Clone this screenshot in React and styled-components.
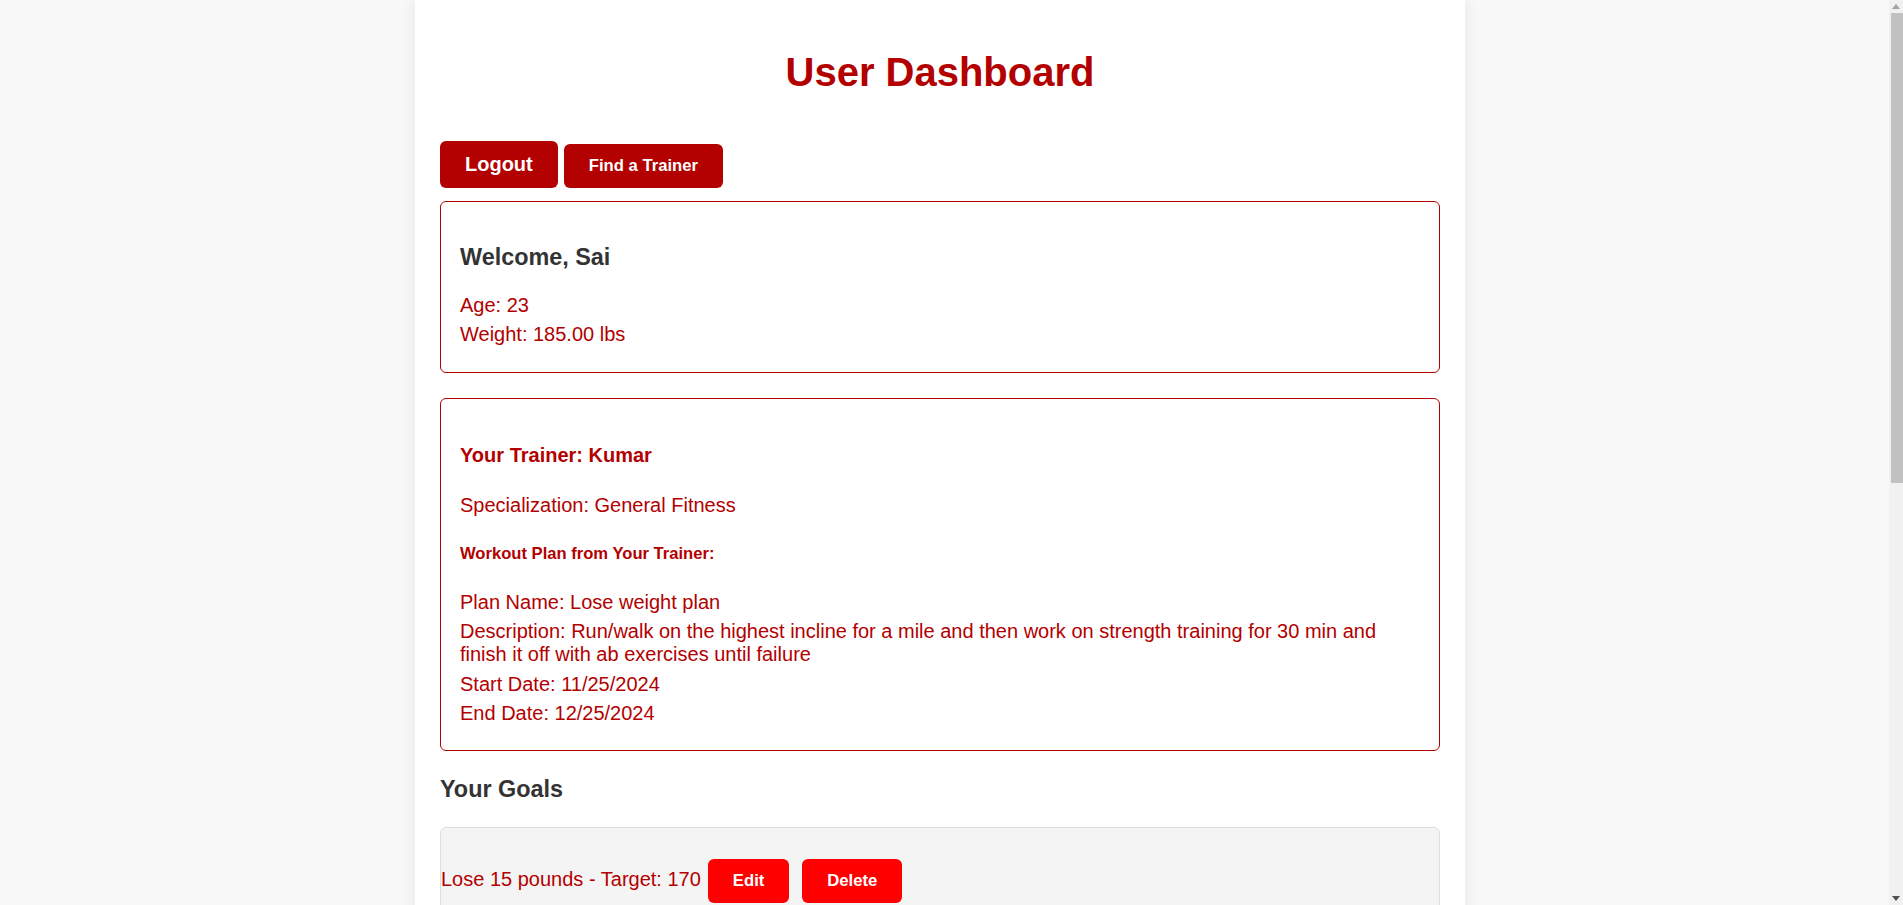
import React from 'react';
import styled, { createGlobalStyle } from 'styled-components';

const GlobalStyle = createGlobalStyle`
  body {
    margin: 0;
    padding-right: 23px;
    background: #f8f8f8;
    font-family: "Liberation Sans", Arial, sans-serif;
  }
`;

const Page = styled.div`
  box-sizing: border-box;
  width: 1050px;
  min-height: 1690px;
  margin: 0 auto;
  padding: 25px 25px 40px;
  background: #ffffff;
  box-shadow: 0 0 16px rgba(0, 0, 0, 0.08);
`;

const Title = styled.h1`
  margin: 24px 0 0;
  font-size: 40px;
  line-height: 46px;
  font-weight: bold;
  text-align: center;
  color: #b30000;
`;

const ButtonRow = styled.div`
  display: flex;
  align-items: baseline;
  gap: 6px;
  margin: 46px 0 13px;
`;

const Button = styled.button`
  border: none;
  border-radius: 6px;
  padding: 12px 25px;
  font-family: "Liberation Sans", Arial, sans-serif;
  font-weight: bold;
  font-size: ${(p) => (p.$big ? '20px' : '16.67px')};
  line-height: ${(p) => (p.$big ? '23px' : '20px')};
  color: #ffffff;
  background: ${(p) => (p.$bright ? '#ff0000' : '#b30000')};
  margin-left: ${(p) => p.$gap || 0}px;
  cursor: pointer;
`;

const Card = styled.div`
  border: 1px solid #b30000;
  border-radius: 6px;
  padding: 19px;
  margin-bottom: 25px;
`;

const Heading = styled.h3`
  margin: 23px 0;
  font-size: 23.4px;
  line-height: 27px;
  font-weight: bold;
  color: #333333;
`;

const TrainerName = styled.h4`
  margin: 26.6px 0;
  font-size: 20px;
  line-height: 23px;
  font-weight: bold;
  color: #b30000;
`;

const PlanHeading = styled.h5`
  margin: 27.7px 0;
  font-size: 16.6px;
  line-height: 19px;
  font-weight: bold;
  color: #b30000;
`;

const Info = styled.p`
  margin: 6.25px 0;
  font-size: 20px;
  line-height: 23px;
  color: #b30000;
`;

const GoalsTitle = styled(Heading)`
  margin-bottom: 24px;
`;

const GoalList = styled.ul`
  list-style: none;
  margin: 0 0 25px;
  padding: 31px 0;
  background: #f4f4f4;
  border: 1px solid #dddddd;
  border-radius: 6px;
`;

const GoalItem = styled.li`
  display: flex;
  align-items: baseline;
  font-size: 20px;
  line-height: 23px;
  color: #b30000;
`;

const Form = styled.form`
  display: flex;
  flex-direction: column;
  gap: 12px;
  max-width: 500px;
`;

const Input = styled.input`
  padding: 10px 12px;
  font-size: 18px;
  font-family: "Liberation Sans", Arial, sans-serif;
  border: 1px solid #cccccc;
  border-radius: 6px;
`;

/* window scrollbar as it appears in the screenshot */
const Scrollbar = styled.div`
  position: fixed;
  top: 0;
  right: 0;
  bottom: 0;
  width: 14px;
  background: #f1f1f1;
  display: flex;
  flex-direction: column;
  align-items: stretch;
`;

const Arrow = styled.div`
  height: 13px;
  display: flex;
  align-items: center;
  justify-content: center;
  margin-top: ${(p) => (p.$down ? 'auto' : '0')};
`;

const Thumb = styled.div`
  height: 470px;
  margin-left: 2px;
  background: #c1c1c1;
`;

const goals = [{ id: 1, text: 'Lose 15 pounds', target: 170 }];

export default function App() {
  return (
    <>
      <GlobalStyle />
      <Page>
        <Title>User Dashboard</Title>
        <ButtonRow>
          <Button $big>Logout</Button>
          <Button>Find a Trainer</Button>
        </ButtonRow>

        <Card>
          <Heading>Welcome, Sai</Heading>
          <Info>Age: 23</Info>
          <Info>Weight: 185.00 lbs</Info>
        </Card>

        <Card>
          <TrainerName>Your Trainer: Kumar</TrainerName>
          <Info>Specialization: General Fitness</Info>
          <PlanHeading>Workout Plan from Your Trainer:</PlanHeading>
          <Info>Plan Name: Lose weight plan</Info>
          <Info>
            Description: Run/walk on the highest incline for a mile and then work on strength
            training for 30 min and finish it off with ab exercises until failure
          </Info>
          <Info>Start Date: 11/25/2024</Info>
          <Info>End Date: 12/25/2024</Info>
        </Card>

        <GoalsTitle>Your Goals</GoalsTitle>
        <GoalList>
          {goals.map((goal) => (
            <GoalItem key={goal.id}>
              {goal.text} - Target: {goal.target}
              <Button $bright $gap={7}>Edit</Button>
              <Button $bright $gap={13}>Delete</Button>
            </GoalItem>
          ))}
        </GoalList>

        <Heading>Add a New Goal</Heading>
        <Form onSubmit={(e) => e.preventDefault()}>
          <Input placeholder="Goal description" />
          <Input placeholder="Target weight" />
          <div>
            <Button>Add Goal</Button>
          </div>
        </Form>
      </Page>

      <Scrollbar>
        <Arrow>
          <svg width="8" height="5" viewBox="0 0 8 5">
            <path d="M4 0 L8 5 L0 5 Z" fill="#a3a3a3" />
          </svg>
        </Arrow>
        <Thumb />
        <Arrow $down>
          <svg width="8" height="5" viewBox="0 0 8 5">
            <path d="M0 0 L8 0 L4 5 Z" fill="#505050" />
          </svg>
        </Arrow>
      </Scrollbar>
    </>
  );
}
